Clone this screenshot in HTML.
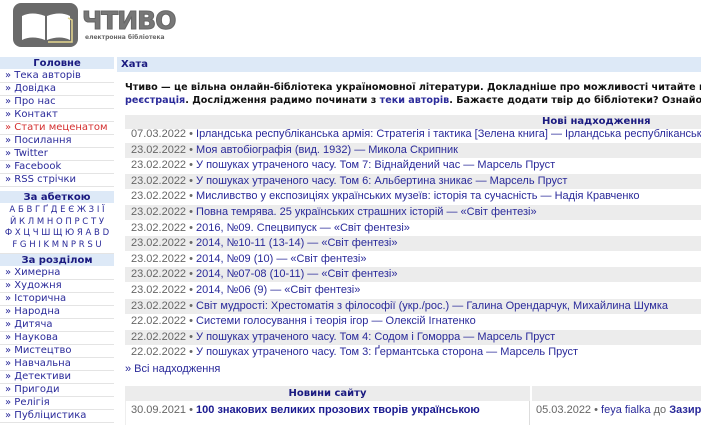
<!DOCTYPE html>
<html><head><meta charset="utf-8"><style>
*{margin:0;padding:0;box-sizing:border-box}
body{width:701px;height:425px;overflow:hidden;background:#fff;font-family:"DejaVu Sans",Verdana,sans-serif;font-size:10px;position:relative}
.a{position:absolute;white-space:nowrap}
.sb{position:absolute;left:0;width:114px;overflow:hidden}
.hd{background:#dde9f7;color:#1a1a80;font-weight:bold;text-align:center;height:13px;line-height:13px;font-size:10px;border-bottom:1px solid #fff}
.it{height:13px;line-height:12px;border-bottom:1px solid #e4e4e4;color:#2a2a9a;padding-left:5px;font-size:10px;white-space:nowrap}
.it.r{color:#d43030}
.row{position:absolute;left:125px;width:580px;height:15px;line-height:15px;font-family:"Liberation Sans",Arial,sans-serif;font-size:11px;white-space:nowrap;padding-left:6px;color:#666}
.row.g{background:#ececec}
.row b{font-weight:normal;color:#2a2a9a}
.l{color:#2a2a9a}
</style></head><body>
<div class="a" style="left:13px;top:3px;width:65px;height:44px;background:#6a6a6a;border-radius:8px"></div>
<svg class="a" style="left:18px;top:8px" width="56" height="36"><path d="M4 8 Q14 3 27 8 L27 32 Q14 27 4 32Z" fill="#fff"/><path d="M29 8 Q42 3 52 8 L52 32 Q42 27 29 32Z" fill="#fff"/><path d="M50 10 L54 12 L54 34 L30 34" stroke="#e6d890" fill="none" stroke-width="1.5"/></svg>
<div class="a" style="left:82px;top:6px;font:bold 25px 'DejaVu Sans',sans-serif;color:#777;letter-spacing:-1px;-webkit-text-stroke:1px #666">ЧТИВО</div>
<div class="a" style="left:85px;top:34px;font:bold 6px 'DejaVu Sans',sans-serif;color:#666">електронна бібліотека</div>

<div class="sb" style="top:57px">
<div class="hd">Головне</div>
<div class="it">» Тека авторів</div><div class="it">» Довідка</div><div class="it">» Про нас</div><div class="it">» Контакт</div><div class="it r">» Стати меценатом</div><div class="it">» Посилання</div><div class="it">» Twitter</div><div class="it">» Facebook</div><div class="it">» RSS стрічки</div>
</div>
<div class="sb" style="top:191px">
<div class="hd">За абеткою</div>
<div style="color:#2a2a9a;text-align:center;font-size:8.5px;line-height:11.5px;padding-top:1px;white-space:nowrap;border-bottom:1px solid #e4e4e4;height:50px">А Б В Г Ґ Д Е Є Ж З І Ї<br>Й К Л М Н О П Р С Т У<br>Ф Х Ц Ч Ш Щ Ю Я A B D<br>F G H I K M N P R S U</div>
</div>
<div class="sb" style="top:254px">
<div class="hd">За розділом</div>
<div class="it">» Химерна</div><div class="it">» Художня</div><div class="it">» Історична</div><div class="it">» Народна</div><div class="it">» Дитяча</div><div class="it">» Наукова</div><div class="it">» Мистецтво</div><div class="it">» Навчальна</div><div class="it">» Детективи</div><div class="it">» Пригоди</div><div class="it">» Релігія</div><div class="it">» Публіцистика</div>
</div>

<div class="a" style="left:117px;top:57px;width:590px;height:15px;background:#dde9f7;color:#1a1a80;font-weight:bold;line-height:15px;padding-left:4px">Хата</div>
<div class="a" style="left:125px;top:81px;font-weight:bold;line-height:13px;color:#111;font-size:9.6px">Чтиво — це вільна онлайн-бібліотека україномовної літератури. Докладніше про можливості читайте на<br><span class="l">реєстрація</span>. Дослідження радимо починати з <span class="l">теки авторів</span>. Бажаєте додати твір до бібліотеки? Ознайомтеся</div>

<div class="a" style="left:125px;top:115px;width:580px;height:14px;background:#ececec;color:#1a1a80;font-weight:bold;line-height:14px;padding-left:417px">Нові надходження</div>
<div class="row" style="top:127px">07.03.2022 • <b>Ірландська республіканська армія: Стратегія і тактика [Зелена книга] — Ірландська республіканська армія</b></div>
<div class="row g" style="top:142.6px">23.02.2022 • <b>Моя автобіографія (вид. 1932) — Микола Скрипник</b></div>
<div class="row" style="top:158.2px">23.02.2022 • <b>У пошуках утраченого часу. Том 7: Віднайдений час — Марсель Пруст</b></div>
<div class="row g" style="top:173.8px">23.02.2022 • <b>У пошуках утраченого часу. Том 6: Альбертина зникає — Марсель Пруст</b></div>
<div class="row" style="top:189.4px">23.02.2022 • <b>Мисливство у експозиціях українських музеїв: історія та сучасність — Надія Кравченко</b></div>
<div class="row g" style="top:205px">23.02.2022 • <b>Повна темрява. 25 українських страшних історій — «Світ фентезі»</b></div>
<div class="row" style="top:220.6px">23.02.2022 • <b>2016, №09. Спецвипуск — «Світ фентезі»</b></div>
<div class="row g" style="top:236.2px">23.02.2022 • <b>2014, №10-11 (13-14) — «Світ фентезі»</b></div>
<div class="row" style="top:251.8px">23.02.2022 • <b>2014, №09 (10) — «Світ фентезі»</b></div>
<div class="row g" style="top:267.4px">23.02.2022 • <b>2014, №07-08 (10-11) — «Світ фентезі»</b></div>
<div class="row" style="top:283px">23.02.2022 • <b>2014, №06 (9) — «Світ фентезі»</b></div>
<div class="row g" style="top:298.6px">23.02.2022 • <b>Світ мудрості: Хрестоматія з філософії (укр./рос.) — Галина Орендарчук, Михайлина Шумка</b></div>
<div class="row" style="top:314.2px">22.02.2022 • <b>Системи голосування і теорія ігор — Олексій Ігнатенко</b></div>
<div class="row g" style="top:329.8px">22.02.2022 • <b>У пошуках утраченого часу. Том 4: Содом і Гоморра — Марсель Пруст</b></div>
<div class="row" style="top:345.4px">22.02.2022 • <b>У пошуках утраченого часу. Том 3: Ґермантська сторона — Марсель Пруст</b></div>
<div class="row" style="top:362px;left:119px"><b>» Всі надходження</b></div>

<div class="a" style="left:125px;top:386px;width:405px;height:15px;background:#ececec;color:#1a1a80;font-weight:bold;line-height:15px;text-align:center">Новини сайту</div>
<div class="a" style="left:532px;top:386px;width:170px;height:15px;background:#ececec"></div>
<div class="a" style="left:125px;top:401px;width:405px;height:24px;border-left:1px solid #eee;border-right:1px solid #ddd"></div>
<div class="row" style="top:403px;width:400px">30.09.2021 • <b style="font-weight:bold;color:#1a1a90">100 знакових великих прозових творів українською</b></div>
<div class="row" style="top:403px;left:530px;width:171px;overflow:hidden">05.03.2022 • <b>feya fialka</b> до <b style="font-weight:bold">Зазирни</b></div>
</body></html>
